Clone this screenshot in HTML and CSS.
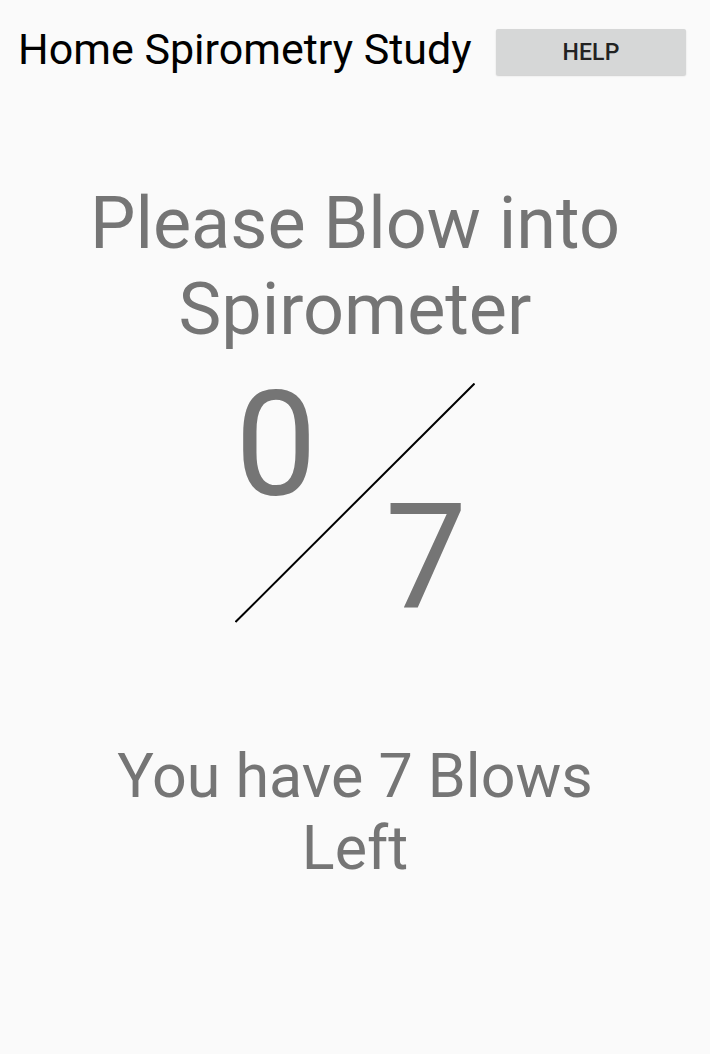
FILE: index.html
```html
<!DOCTYPE html>
<html lang="en">
<head>
<meta charset="utf-8">
<title>Home Spirometry Study</title>
<link rel="stylesheet" href="styles.css">
</head>
<body>
<div class="screen">
  <header class="topbar">
    <h1 class="title">Home Spirometry Study</h1>
    <button class="help-btn" type="button">HELP</button>
  </header>
  <main class="content">
    <p class="prompt">Please Blow into Spirometer</p>
    <div class="fraction">
      <span class="num num-top">0</span>
      <span class="num num-bottom">7</span>
      <svg class="slash" width="240" height="240" viewBox="0 0 240 240" aria-hidden="true">
        <line x1="0.5" y1="239" x2="239.5" y2="0.5" stroke="#000" stroke-width="2"/>
      </svg>
    </div>
    <p class="remaining">You have 7 Blows Left</p>
  </main>
</div>
</body>
</html>
```

FILE: styles.css
```css
* { box-sizing: border-box; }

html, body {
  margin: 0;
  padding: 0;
  background: #fafafa;
}

body {
  font-family: Roboto, "Noto Sans", sans-serif;
  width: 710px;
  height: 1054px;
  overflow: hidden;
}

.screen {
  display: flex;
  flex-direction: column;
}

.topbar {
  display: flex;
  justify-content: space-between;
  align-items: flex-start;
  padding: 24px 24px 0 18px;
}

.title {
  margin: 0;
  font-size: 43px;
  font-weight: 400;
  line-height: 50px;
  color: #000;
}

.help-btn {
  margin-top: 5px;
  width: 190px;
  height: 46px;
  border: none;
  border-radius: 2px;
  background: #d6d7d7;
  box-shadow: 0 1px 1.5px rgba(0, 0, 0, 0.18);
  font-family: Roboto, "Noto Sans", sans-serif;
  font-size: 23px;
  font-weight: 500;
  color: #222;
  padding: 0;
  letter-spacing: 0.2px;
}

.content {
  display: flex;
  flex-direction: column;
  align-items: center;
  padding-top: 106px;
}

.prompt {
  margin: 0;
  width: 660px;
  text-align: center;
  font-size: 72px;
  line-height: 86px;
  color: #757575;
}

.fraction {
  position: relative;
  width: 240px;
  height: 240px;
  margin-top: 30px;
  display: flex;
  justify-content: space-between;
}

.num {
  font-size: 146px;
  line-height: 1;
  color: #757575;
}

.num-top {
  align-self: flex-start;
  margin-top: -10px;
}

.num-bottom {
  align-self: flex-end;
  margin-bottom: -8px;
  margin-right: 8px;
}

.slash {
  position: absolute;
  left: 0;
  top: 0;
}

.remaining {
  margin: 117px 0 0;
  width: 520px;
  text-align: center;
  font-size: 61px;
  line-height: 72px;
  color: #757575;
}
```
